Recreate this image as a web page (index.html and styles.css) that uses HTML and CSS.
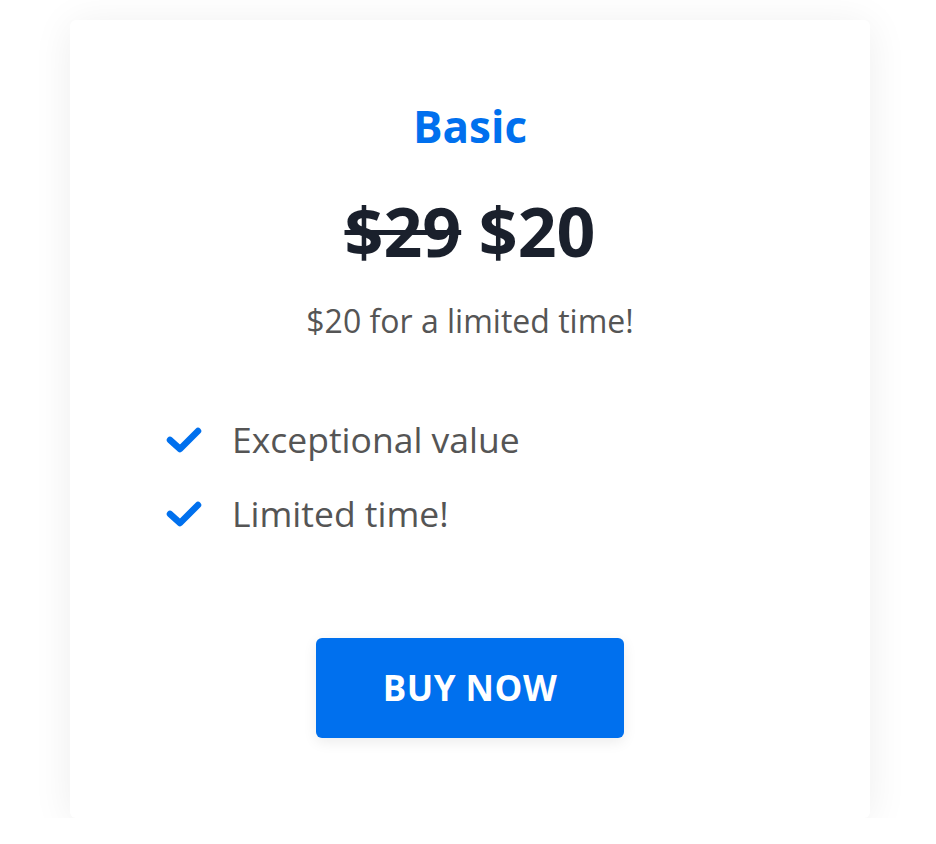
FILE: index.html
```html
<!doctype html>
<html>
  <head>
    <meta charset="utf-8">
    <title>Pricing</title>
    <link rel="stylesheet" href="styles.css">
  </head>
  <body>
    <div class="card">
      <h2 class="plan">Basic</h2>
      <p class="price"><s class="old">$29</s> $20</p>
      <p class="note">$20 for a limited time!</p>
      <ul class="features">
        <li>
          <svg class="check" viewBox="0 0 36 28" width="36" height="28"><polyline points="4,15 14,24 32,6" fill="none" stroke="currentColor" stroke-width="6.5" stroke-linecap="round" stroke-linejoin="round"/></svg>
          Exceptional value
        </li>
        <li>
          <svg class="check" viewBox="0 0 36 28" width="36" height="28"><polyline points="4,15 14,24 32,6" fill="none" stroke="currentColor" stroke-width="6.5" stroke-linecap="round" stroke-linejoin="round"/></svg>
          Limited time!
        </li>
      </ul>
      <div class="actions">
        <a class="buy" href="#">BUY NOW</a>
      </div>
    </div>
  </body>
</html>
```

FILE: styles.css
```css
body {
  margin: 0;
  padding: 20px 0 0 70px;
  background: #fff;
  font-family: "Open Sans", "Liberation Sans", sans-serif;
}

.card {
  width: 800px;
  box-sizing: border-box;
  padding: 76px 0 80px;
  background: #fff;
  border-radius: 6px;
  box-shadow: 0 4px 40px rgba(0, 0, 0, 0.07);
}

.plan {
  margin: 0;
  text-align: center;
  font-size: 44px;
  line-height: 60px;
  font-weight: 700;
  color: #0070ee;
}

.price {
  margin: 35px 0 0;
  text-align: center;
  font-size: 68px;
  line-height: 80px;
  font-weight: 700;
  color: #1a202c;
}

.old {
  text-decoration-thickness: 5px;
}

.note {
  margin: 28px 0 0;
  text-align: center;
  font-size: 32px;
  line-height: 44px;
  color: #555;
}

.features {
  list-style: none;
  margin: 59px 0 0;
  padding: 0 0 0 96px;
}

.features li {
  display: flex;
  align-items: center;
  gap: 30px;
  font-size: 35.5px;
  line-height: 74px;
  color: #555;
}

.check {
  color: #0070ee;
  flex: none;
}

.actions {
  margin-top: 88px;
  display: flex;
  justify-content: center;
}

.buy {
  width: 308px;
  height: 100px;
  display: flex;
  align-items: center;
  justify-content: center;
  background: #0070ee;
  color: #fff;
  border-radius: 6px;
  text-decoration: none;
  font-size: 35px;
  font-weight: 700;
  letter-spacing: 0.5px;
  line-height: 50px;
  box-shadow: 0 4px 14px rgba(0, 0, 0, 0.08);
}
```
